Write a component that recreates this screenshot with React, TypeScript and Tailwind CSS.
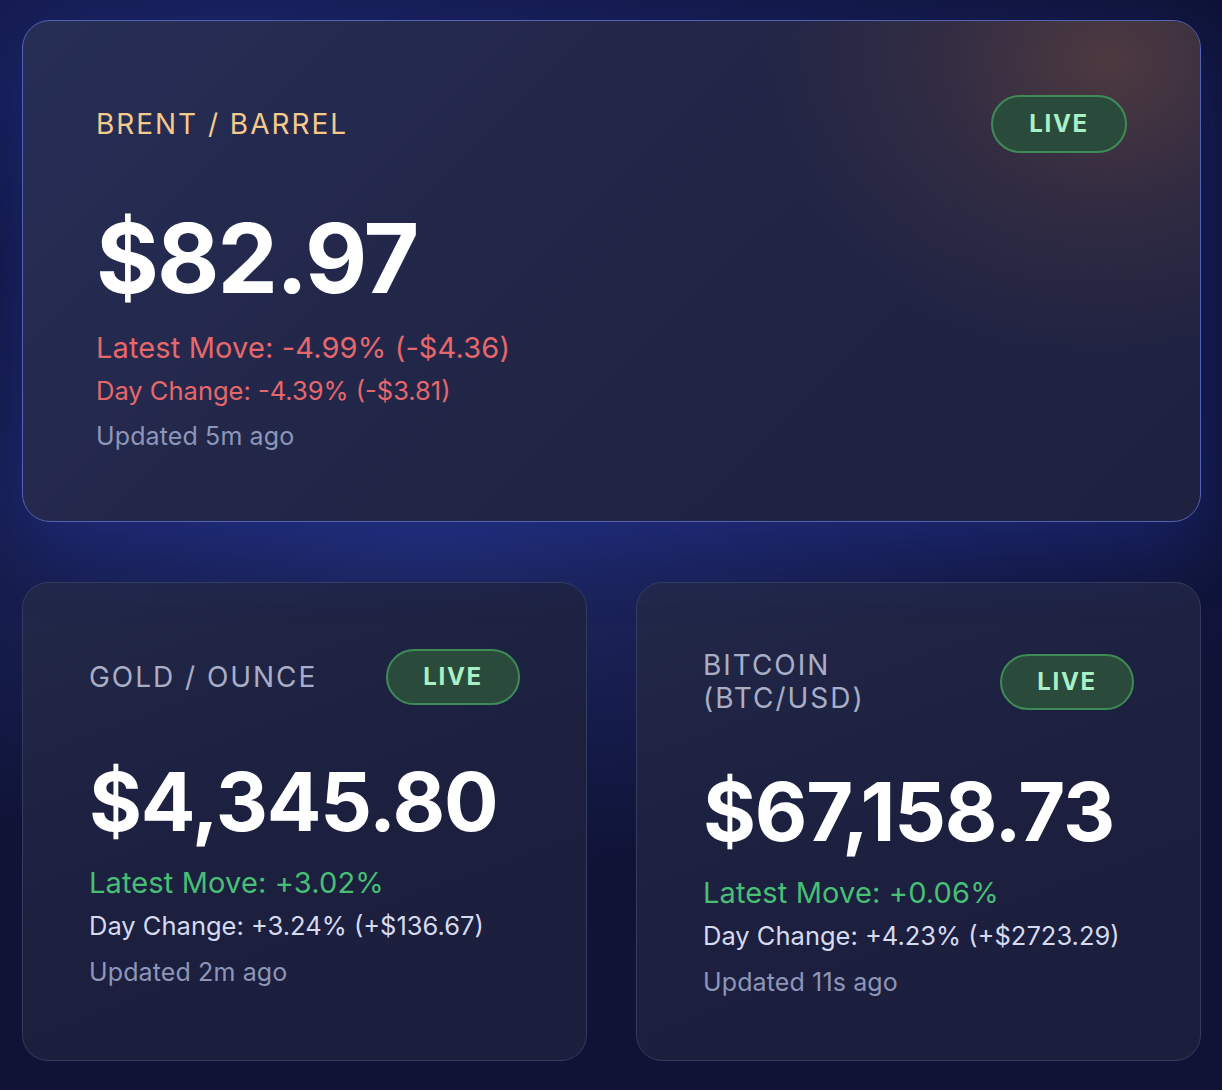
import React from "react";

type Quote = {
  label: string;
  labelColor: string;
  price: string;
  latest: string;
  latestColor: string;
  day: string;
  dayColor: string;
  updated: string;
};

const LiveBadge = ({ big }: { big?: boolean }) => (
  <div
    className={`flex shrink-0 items-center justify-center rounded-full border-2 border-[#3f8b57] bg-[#2a4b3b] font-bold tracking-[0.07em] text-[#a9f0c6] ${
      big ? "h-[58px] w-[136px] text-[24px]" : "h-[56px] w-[134px] text-[24px]"
    }`}
  >
    LIVE
  </div>
);

const SmallCard = ({ q }: { q: Quote }) => (
  <div className="flex h-[479px] flex-col rounded-[26px] border border-[#353b5e] bg-[linear-gradient(160deg,#222849_0%,#1c1f3e_55%,#1b1e3c_100%)] px-[66px] pt-[66px]">
    <div className="flex items-center justify-between gap-[24px]">
      <div className={`text-[28px] leading-[33px] tracking-[0.07em] ${q.labelColor}`}>{q.label}</div>
      <LiveBadge />
    </div>
    <div className="mt-[57px] text-[81px] font-bold leading-[81px] tracking-[-0.015em] text-white">{q.price}</div>
    <div className={`mt-[20px] text-[29px] leading-[40px] tracking-[0.005em] ${q.latestColor}`}>{q.latest}</div>
    <div className={`mt-[5px] text-[25.5px] leading-[36px] ${q.dayColor}`}>{q.day}</div>
    <div className="mt-[10px] text-[25px] leading-[36px] tracking-[0.005em] text-[#8d96b9]">{q.updated}</div>
  </div>
);

const App = () => {
  const gold: Quote = {
    label: "GOLD / OUNCE",
    labelColor: "text-[#a9aec6]",
    price: "$4,345.80",
    latest: "Latest Move: +3.02%",
    latestColor: "text-[#47bf75]",
    day: "Day Change: +3.24% (+$136.67)",
    dayColor: "text-[#d6daef]",
    updated: "Updated 2m ago",
  };
  const btc: Quote = {
    label: "BITCOIN (BTC/USD)",
    labelColor: "text-[#a9aec6]",
    price: "$67,158.73",
    latest: "Latest Move: +0.06%",
    latestColor: "text-[#47bf75]",
    day: "Day Change: +4.23% (+$2723.29)",
    dayColor: "text-[#d6daef]",
    updated: "Updated 11s ago",
  };

  return (
    <div
      className="min-h-[1090px] w-full bg-[#0f1336] bg-[radial-gradient(ellipse_70%_30%_at_35%_50%,#1e2865_0%,rgba(20,26,70,0)_100%),radial-gradient(ellipse_80%_40%_at_20%_0%,#18205a_0%,rgba(15,19,54,0)_100%)] pb-[29px] pl-[22px] pr-[21px] pt-[20px]"
      style={{ fontFamily: "Inter, 'Noto Sans', sans-serif" }}
    >
      <div className="flex flex-col gap-[60px]">
        <div className="relative h-[502px] overflow-hidden rounded-[28px] border-[1.5px] border-[#5462b4] bg-[linear-gradient(135deg,#272e56_0%,#212546_50%,#1e2140_100%)] px-[73px] pt-[74px] shadow-[0_24px_70px_rgba(40,60,190,0.35)]">
          <div className="pointer-events-none absolute right-[-260px] top-[-260px] h-[600px] w-[700px] rounded-full bg-[radial-gradient(closest-side,rgba(115,75,60,0.55),rgba(115,75,60,0.2)_50%,rgba(115,75,60,0))]" />
          <div className="relative flex items-center justify-between">
            <div className="text-[28px] leading-[35px] tracking-[0.07em] text-[#f4c98c]">BRENT / BARREL</div>
            <LiveBadge big />
          </div>
          <div className="relative mt-[57px] text-[96px] font-bold leading-[96px] tracking-[-0.02em] text-white">$82.97</div>
          <div className="relative mt-[22px] text-[29px] leading-[40px] tracking-[0.005em] text-[#e7676b]">Latest Move: -4.99% (-$4.36)</div>
          <div className="relative mt-[5px] text-[25.5px] leading-[36px] text-[#e7676b]">Day Change: -4.39% (-$3.81)</div>
          <div className="relative mt-[9px] text-[25px] leading-[36px] tracking-[0.005em] text-[#8d96b9]">Updated 5m ago</div>
        </div>
        <div className="grid grid-cols-2 gap-[49px]">
          <SmallCard q={gold} />
          <SmallCard q={btc} />
        </div>
      </div>
    </div>
  );
};

export default App;
